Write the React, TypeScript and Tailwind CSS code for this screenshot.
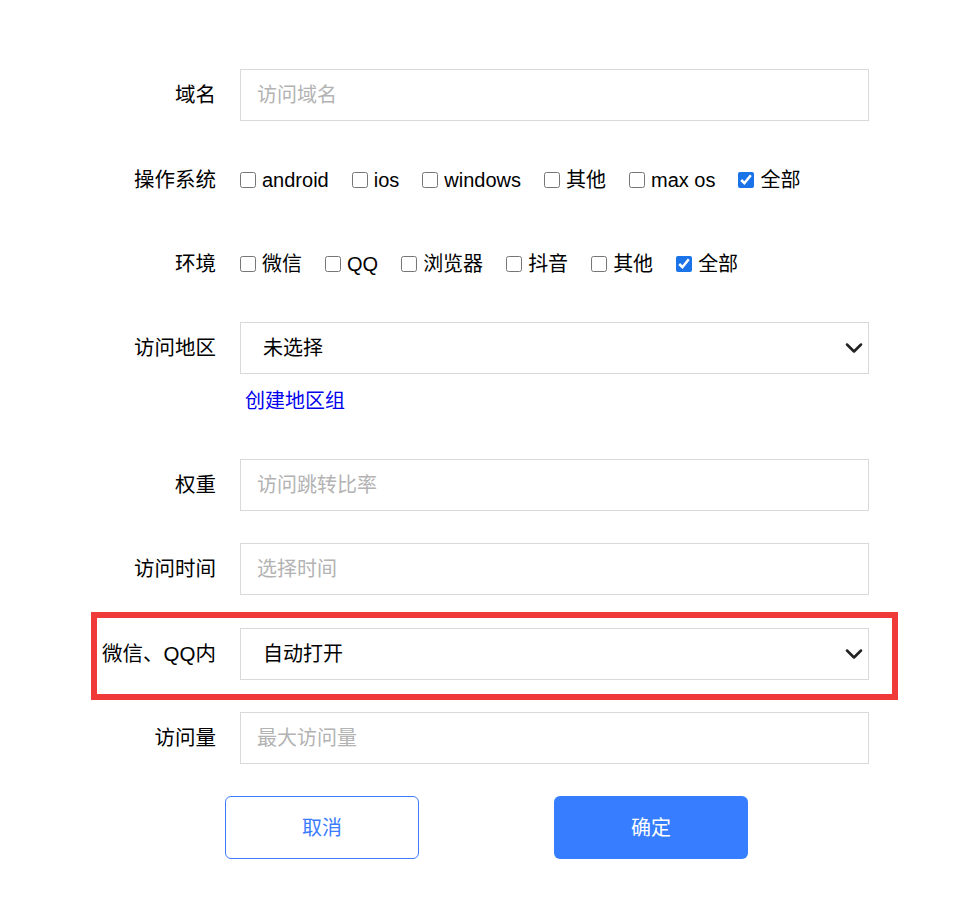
import { ChevronDown } from 'lucide-react';

const font = { fontFamily: '"Liberation Sans", "Noto Sans CJK SC", sans-serif' };

function Label({ text }: { text: string }) {
    return <div className="w-[120px] shrink-0 text-right text-[20.5px] text-black">{text}</div>;
}

function TextRow({ label, placeholder }: { label: string; placeholder: string }) {
    return (
        <div className="flex items-center gap-6">
            <Label text={label} />
            <input
                placeholder={placeholder}
                className="h-[52px] w-[629px] border border-[#d9d9d9] px-4 text-[20px] outline-none placeholder:text-[#b3b3b3]"
                style={font}
            />
        </div>
    );
}

function SelectRow({ label, value }: { label: string; value: string }) {
    return (
        <div className="flex items-center gap-6">
            <Label text={label} />
            <div className="flex h-[52px] w-[629px] items-center justify-between border border-[#d9d9d9] pl-[22px] text-[20px] text-black">
                <span>{value}</span>
                <ChevronDown className="h-7 w-7 text-[#222]" strokeWidth={2.2} />
            </div>
        </div>
    );
}

function CheckRow({ label, items, checked }: { label: string; items: string[]; checked: string }) {
    return (
        <div className="flex h-[52px] items-center gap-6">
            <Label text={label} />
            <div className="flex items-center gap-[23px]">
                {items.map((it) => (
                    <label key={it} className="flex items-center gap-[6px] text-[20px] text-black">
                        <input type="checkbox" defaultChecked={it === checked} className="h-4 w-4 accent-[#1a73e8]" />
                        <span>{it}</span>
                    </label>
                ))}
            </div>
        </div>
    );
}

export default function App() {
    return (
        <div className="min-h-[897px] bg-white pl-[96px] pt-[69px]" style={font}>
            <TextRow label="域名" placeholder="访问域名" />
            <div className="mt-[33px]">
                <CheckRow label="操作系统" items={['android', 'ios', 'windows', '其他', 'max os', '全部']} checked="全部" />
            </div>
            <div className="mt-8">
                <CheckRow label="环境" items={['微信', 'QQ', '浏览器', '抖音', '其他', '全部']} checked="全部" />
            </div>
            <div className="mt-8">
                <SelectRow label="访问地区" value="未选择" />
            </div>
            <div className="ml-[149px] mt-[14px] text-[20px] leading-[26px] text-[#0000ee]">创建地区组</div>
            <div className="mt-[45px]">
                <TextRow label="权重" placeholder="访问跳转比率" />
            </div>
            <div className="mt-8">
                <TextRow label="访问时间" placeholder="选择时间" />
            </div>
            <div className="-ml-[5px] mt-[17px] w-[807px] border-[6px] border-[#f03a3a] pb-[14px] pt-[10px]">
                <div className="-ml-px">
                    <SelectRow label="微信、QQ内" value="自动打开" />
                </div>
            </div>
            <div className="mt-3">
                <TextRow label="访问量" placeholder="最大访问量" />
            </div>
            <div className="ml-[129px] mt-8 flex gap-[135px]">
                <button className="h-[63px] w-[194px] rounded-md border border-[#3b7cff] bg-white text-[20px] text-[#3b7cff]">
                    取消
                </button>
                <button className="h-[63px] w-[194px] rounded-md bg-[#377dff] text-[20px] text-white">确定</button>
            </div>
        </div>
    );
}
